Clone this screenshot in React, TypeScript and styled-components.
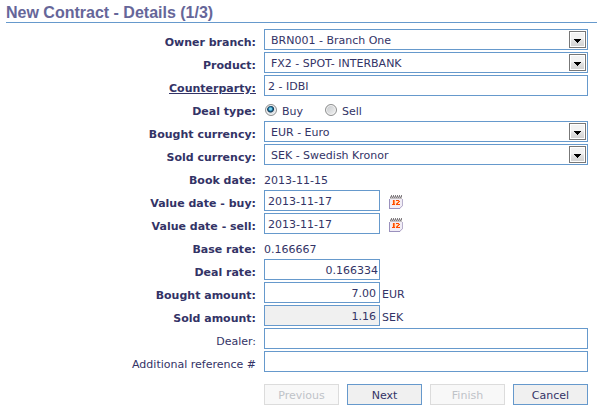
import React from "react";
import styled, { createGlobalStyle } from "styled-components";

const GlobalStyle = createGlobalStyle`
  *, *::before, *::after { box-sizing: border-box; }
  body {
    margin: 0;
    background: #fff;
    color: #333366;
    font: 11px/15px Verdana, "DejaVu Sans", sans-serif;
  }
`;

const Page = styled.main`
  padding: 3px 11px 4px 6px;
`;

const Title = styled.h1`
  margin: 0 0 6px;
  border-bottom: 1px solid #6699cc;
  color: #666699;
  font: bold 16px/19px Arial, "Liberation Sans", sans-serif;
`;

const Form = styled.form`
  display: flex;
  flex-direction: column;
  gap: 2px;
  padding-right: 9px;
`;

const Row = styled.div`
  display: grid;
  grid-template-columns: 250px minmax(0, 1fr);
  column-gap: 8px;
  min-height: 21px;
`;

const Label = styled.label<{ $optional?: boolean; $underlined?: boolean }>`
  padding-top: 6px;
  text-align: right;
  white-space: nowrap;
  font-weight: ${(p) => (p.$optional ? "normal" : "bold")};
  text-decoration: ${(p) => (p.$underlined ? "underline" : "none")};
`;

const Field = styled.div`
  display: flex;
  align-items: center;
`;

const Input = styled.input<{ $short?: boolean; $numeric?: boolean; $tight?: boolean }>`
  width: ${(p) => (p.$short ? "116px" : "100%")};
  height: 21px;
  margin: 0;
  padding: 2px ${(p) => (p.$tight ? "1px" : "3px")} 0 3px;
  border: 1px solid #6699cc;
  border-radius: 0;
  background: #fff;
  color: inherit;
  font: inherit;
  text-align: ${(p) => (p.$numeric ? "right" : "left")};
  &:read-only { background: #f0f0f0; }
`;

const SelectBox = styled.div`
  position: relative;
  width: 100%;
`;

const Select = styled.select`
  display: block;
  appearance: none;
  width: 100%;
  height: 21px;
  padding: 2px 22px 0 6px;
  border: 1px solid #6699cc;
  border-radius: 0;
  background: #fff;
  color: inherit;
  font: inherit;
`;

const Arrow = styled.span`
  position: absolute;
  top: 2px;
  right: 2px;
  display: grid;
  place-items: center;
  width: 17px;
  height: 17px;
  padding-top: 2px;
  border: 1px solid #777;
  background: linear-gradient(#f3f3f3 45%, #e2e2e2 55%, #d0d0d0);
  box-shadow: inset 0 0 0 1px #fff;
  pointer-events: none;
`;

const Value = styled.output`
  padding-top: 6px;
`;

const Unit = styled.span`
  padding: 4px 0 0 2px;
`;

const Option = styled.label`
  display: flex;
  align-items: center;
  gap: 5px;
  margin: 3px 21px 0 1px;
  & > span { padding-top: 2px; }
`;

const Radio = styled.input`
  appearance: none;
  width: 12px;
  height: 12px;
  margin: 0;
  border: 1px solid #8e8f8f;
  border-radius: 50%;
  background: linear-gradient(135deg, #c4c7ca, #f4f4f4);
  box-shadow: inset 0 0 0 1px #f4f4f4;
  &:checked {
    background: radial-gradient(circle at 45% 40%, #7bd3ef 0 1px, #1f79a5 2px, #12344e 3px, #dde2e6 4px);
  }
`;

const DateButton = styled.button`
  display: flex;
  margin: 2px 0 0 9px;
  padding: 0;
  border: 0;
  background: none;
`;

const Actions = styled.div`
  display: flex;
  justify-content: flex-end;
  gap: 8px;
  margin-top: 10px;
`;

const Button = styled.button`
  width: 75px;
  height: 21px;
  padding: 2px 0 0;
  border: 1px solid #6699cc;
  border-radius: 0;
  background: #f0f0f0;
  color: inherit;
  font: inherit;
  &:disabled {
    border-color: #dcdcdc;
    background: #f8f8f8;
    color: #bfc3c8;
  }
`;

function CalendarIcon() {
  return (
    <svg width="14" height="14" viewBox="0 0 14 14" aria-hidden="true" shapeRendering="crispEdges">
      <path d="M1 1h12v3h1v7l-3 3H0V4h1z" fill="#f1edf6" />
      <path d="M0 4h1v9H0zM0 13h11v1H0z" fill="#9a91bd" />
      <path d="M13 4h1v7h-1zM12 11h1v1h-1zM11 12h1v1h-1z" fill="#b8b0cc" />
      <path d="M1 1h12v3H1z" fill="#c4c0c3" />
      <path d="M2 0h1v2H2zM4 0h1v2H4zM6 0h1v2H6zM8 0h1v2H8zM10 0h1v2h-1zM12 0h1v2h-1zM1 2h1v1H1zM3 2h1v1H3zM5 2h1v1H5zM7 2h1v1H7zM9 2h1v1H9zM11 2h1v1h-1z" fill="#827e81" />
      <path d="M3 5h8v5H3z" fill="#ffe3cf" />
      <path d="M4 5h1v4h1v1H3V9h1V6H3zM7 5h3v1H7zM10 6h1v1h-1zM9 7h1v1H9zM8 8h1v1H8zM7 9h4v1H7z" fill="#ff4a00" />
      <path d="M5 5h1v4H5zM9 6h1v1H9zM8 7h1v1H8zM7 8h1v1H7z" fill="#ff8a4a" />
    </svg>
  );
}

function SelectRow({ id, label, value }: { id: string; label: string; value: string }) {
  return (
    <Row>
      <Label htmlFor={id}>{label}</Label>
      <Field>
        <SelectBox>
          <Select id={id} defaultValue={value}>
            <option>{value}</option>
          </Select>
          <Arrow>
            <svg width="7" height="4" viewBox="0 0 7 4" shapeRendering="crispEdges" aria-hidden="true">
              <path d="M0 0h7v1H6v1H5v1H4v1H3V3H2V2H1V1H0z" fill="#000" />
            </svg>
          </Arrow>
        </SelectBox>
      </Field>
    </Row>
  );
}

function DateRow({ id, label }: { id: string; label: string }) {
  return (
    <Row>
      <Label htmlFor={id}>{label}</Label>
      <Field>
        <Input id={id} $short defaultValue="2013-11-17" />
        <DateButton type="button" aria-label="Choose date">
          <CalendarIcon />
        </DateButton>
      </Field>
    </Row>
  );
}

function ValueRow({ id, label, value }: { id: string; label: string; value: string }) {
  return (
    <Row>
      <Label htmlFor={id}>{label}</Label>
      <Value id={id}>{value}</Value>
    </Row>
  );
}

export default function App() {
  return (
    <>
      <GlobalStyle />
      <Page>
        <Title>New Contract - Details (1/3)</Title>
        <Form onSubmit={(e) => e.preventDefault()}>
          <SelectRow id="branch" label="Owner branch:" value="BRN001 - Branch One" />
          <SelectRow id="product" label="Product:" value="FX2 - SPOT- INTERBANK" />
          <Row>
            <Label htmlFor="counterparty" $underlined>Counterparty:</Label>
            <Field><Input id="counterparty" defaultValue="2 - IDBI" /></Field>
          </Row>
          <Row role="radiogroup" aria-labelledby="deal-type">
            <Label as="span" id="deal-type">Deal type:</Label>
            <Field>
              <Option><Radio type="radio" name="deal" defaultChecked /><span>Buy</span></Option>
              <Option><Radio type="radio" name="deal" /><span>Sell</span></Option>
            </Field>
          </Row>
          <SelectRow id="bought-currency" label="Bought currency:" value="EUR - Euro" />
          <SelectRow id="sold-currency" label="Sold currency:" value="SEK - Swedish Kronor" />
          <ValueRow id="book-date" label="Book date:" value="2013-11-15" />
          <DateRow id="date-buy" label="Value date - buy:" />
          <DateRow id="date-sell" label="Value date - sell:" />
          <ValueRow id="base-rate" label="Base rate:" value="0.166667" />
          <Row>
            <Label htmlFor="deal-rate">Deal rate:</Label>
            <Field><Input id="deal-rate" $short $numeric $tight defaultValue="0.166334" /></Field>
          </Row>
          <Row>
            <Label htmlFor="bought-amount">Bought amount:</Label>
            <Field><Input id="bought-amount" $short $numeric defaultValue="7.00" /><Unit>EUR</Unit></Field>
          </Row>
          <Row>
            <Label htmlFor="sold-amount">Sold amount:</Label>
            <Field><Input id="sold-amount" $short $numeric readOnly defaultValue="1.16" /><Unit>SEK</Unit></Field>
          </Row>
          <Row>
            <Label htmlFor="dealer" $optional>Dealer:</Label>
            <Field><Input id="dealer" /></Field>
          </Row>
          <Row>
            <Label htmlFor="reference" $optional>Additional reference #</Label>
            <Field><Input id="reference" /></Field>
          </Row>
          <Actions>
            <Button type="button" disabled>Previous</Button>
            <Button type="submit">Next</Button>
            <Button type="button" disabled>Finish</Button>
            <Button type="button">Cancel</Button>
          </Actions>
        </Form>
      </Page>
    </>
  );
}
